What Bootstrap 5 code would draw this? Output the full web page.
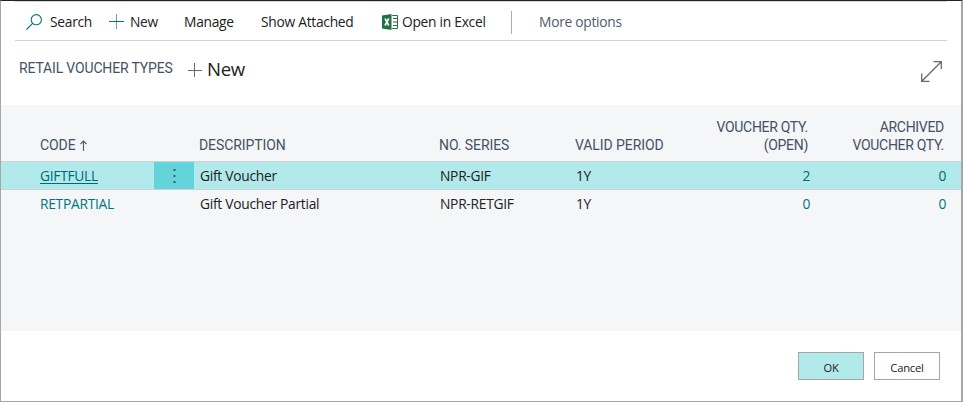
<!DOCTYPE html>
<html lang="en">
<head>
<meta charset="utf-8">
<meta name="viewport" content="width=device-width, initial-scale=1">
<title>Retail Voucher Types</title>
<link href="https://cdn.jsdelivr.net/npm/bootstrap@5.3.0/dist/css/bootstrap.min.css" rel="stylesheet">
<style>
body{font-family:"Open Sans","Noto Sans",sans-serif;font-size:13.8px;letter-spacing:-.28px;line-height:18px;color:#212121;background:#fff;overflow:hidden}
.dialog{height:402px;border:solid #a6a6a6;border-width:1px 2px 1px 1px;border-top-color:#252223}
.toolbar{height:40px;margin:0 14px;padding-top:2px;border:solid #d2d2d7;border-width:1px 0}
.toolbar button,.cmd{border:0;background:none;padding:0;color:inherit;letter-spacing:inherit;white-space:nowrap;text-align:left;flex:none}
.w-search{width:83px;margin-left:11px}.w-new{width:75px}.w-manage{width:77px}.w-show{width:121px}.w-excel{width:129px}
.rule{width:1px;height:23px;background:#a9adb7;margin-right:27px}
.muted{color:#505c6d!important}
.title{font-family:Roboto,sans-serif;color:#465264;font-size:14px;letter-spacing:-.16px;width:168px;white-space:nowrap}
.part{height:64px;padding:20px 19px 0 18px}
.part-new{font-size:18.6px;line-height:16px;letter-spacing:-.3px}
.grid-area{height:226px;background:#f5f6f8}
.vt{table-layout:fixed;width:960px;border-collapse:separate;border-spacing:0}
.vt th{font-family:Roboto,sans-serif;color:#465264;font-weight:400;font-size:14px;letter-spacing:-.08px;height:56px;padding:0 0 7px 5px;vertical-align:bottom;line-height:18px}
.vt th:first-child{padding-left:39px}
.vt td{height:27px;padding:0 0 0 6px;vertical-align:middle;white-space:nowrap}
.vt td:first-child{padding-left:39px}
.vt .sel td{background:#b2e9eb;border:solid #cfd2d6;border-width:1px 0;height:29px}
.vt .sel td.more{background:#64d4db;padding:0}
.vt .n2{text-align:right;padding-right:15px}
.vt th.n2{padding-right:17px}
.vt th .qty,.vt th.qty{letter-spacing:-.3px}
.vt a,.teal{color:#00757d;text-decoration:none}
.vt .sel a{text-decoration:underline;text-underline-offset:2px}
.vt .sel a,.vt .sel .teal{color:#006a72}
.two{padding-right:8px}
.cells{padding-right:6px}
.foot{padding:21px 21px 0 0;gap:10px}
.act{width:66px;height:28px;border:1px solid #a6a6a6;background:#fff;font-size:11.2px;letter-spacing:-.2px;line-height:14px;padding:4px 0 0;color:#212121}
.act.ok{background:#b2e9eb}
svg{display:block;flex:none}
</style>
<script src="https://cdn.jsdelivr.net/npm/bootstrap@5.3.0/dist/js/bootstrap.bundle.min.js"></script>
</head>
<body>
<main class="dialog">
  <nav class="toolbar d-flex align-items-center">
    <button class="w-search d-flex align-items-center"><svg class="me-2" width="16" height="16" viewBox="0 0 16 16" fill="none" stroke="#00757d" stroke-width="1.1"><circle cx="10.3" cy="5.7" r="5.1"/><path d="M6.6 9.4.5 15.5"/></svg>Search</button>
    <button class="w-new d-flex align-items-center"><svg width="21" height="16" viewBox="0 0 21 16" fill="none"><path d="M7.5 0v15" stroke="#6e9ba4"/><path d="M0 7.5h15" stroke="#00757d"/></svg>New</button>
    <button class="w-manage">Manage</button>
    <button class="w-show">Show Attached</button>
    <button class="w-excel d-flex align-items-center"><svg width="20" height="16" viewBox="0 0 20 16"><path d="M0 1.4 9.5 0v16L0 14.6z" fill="#217346"/><path d="M10.2 1.5h5.3v13h-5.3" fill="#fff" stroke="#217346"/><path d="M11 4.5h4M11 8h4M11 11.5h4" stroke="#217346" stroke-width="1.2"/><path d="m3 4.5 3.8 7M6.8 4.5 3 11.5" stroke="#fff" stroke-width="1.6"/></svg>Open in Excel</button>
    <span class="rule"></span>
    <button class="muted">More options</button>
  </nav>
  <header class="part d-flex align-items-start">
    <span class="title lh-1">RETAIL VOUCHER TYPES</span>
    <button class="cmd part-new d-flex align-items-center"><svg width="20" height="15" viewBox="0 0 20 15" fill="none" stroke="#68686d"><path d="M7.5 1v14M1 8.5h14"/></svg>New</button>
    <svg class="ms-auto" width="21" height="21" viewBox="0 0 21 21" fill="none" stroke="#68686d" stroke-width="1.3"><path d="M1 20 20 1M12.5.7h7.8V8M.7 12.5v7.8H8.5"/></svg>
  </header>
  <section class="grid-area">
    <table class="vt">
      <colgroup><col style="width:153px"><col style="width:40px"><col style="width:240px"><col style="width:136px"><col style="width:246px"><col style="width:145px"></colgroup>
      <thead><tr><th><span class="d-flex align-items-center">CODE<svg class="ms-1" width="7" height="11" viewBox="0 0 7 11" fill="none" stroke="#505c6d" stroke-width="1.1"><path d="M3.5 11V1M.5 4l3-3 3 3"/></svg></span></th><th></th><th>DESCRIPTION</th><th>NO. SERIES</th><th><div class="d-flex justify-content-between align-items-end two"><span>VALID PERIOD</span><span class="text-end qty">VOUCHER QTY.<br>(OPEN)</span></div></th><th class="n2 qty">ARCHIVED<br>VOUCHER QTY.</th></tr></thead>
      <tbody>
        <tr class="sel"><td><a href="#">GIFTFULL</a></td><td class="more"><svg class="mx-auto" width="3" height="14" viewBox="0 0 3 14" fill="#3c5a66"><path d="M.5 0h2v2h-2zM.5 6h2v2h-2zM.5 12h2v2h-2z"/></svg></td><td>Gift Voucher</td><td>NPR-GIF</td><td><div class="d-flex justify-content-between cells"><span>1Y</span><span class="teal">2</span></div></td><td class="n2 teal">0</td></tr>
        <tr><td><a href="#">RETPARTIAL</a></td><td></td><td>Gift Voucher Partial</td><td>NPR-RETGIF</td><td><div class="d-flex justify-content-between cells"><span>1Y</span><span class="teal">0</span></div></td><td class="n2 teal">0</td></tr>
      </tbody>
    </table>
  </section>
  <footer class="foot d-flex justify-content-end"><button class="act ok">OK</button><button class="act">Cancel</button></footer>
</main>
</body>
</html>
